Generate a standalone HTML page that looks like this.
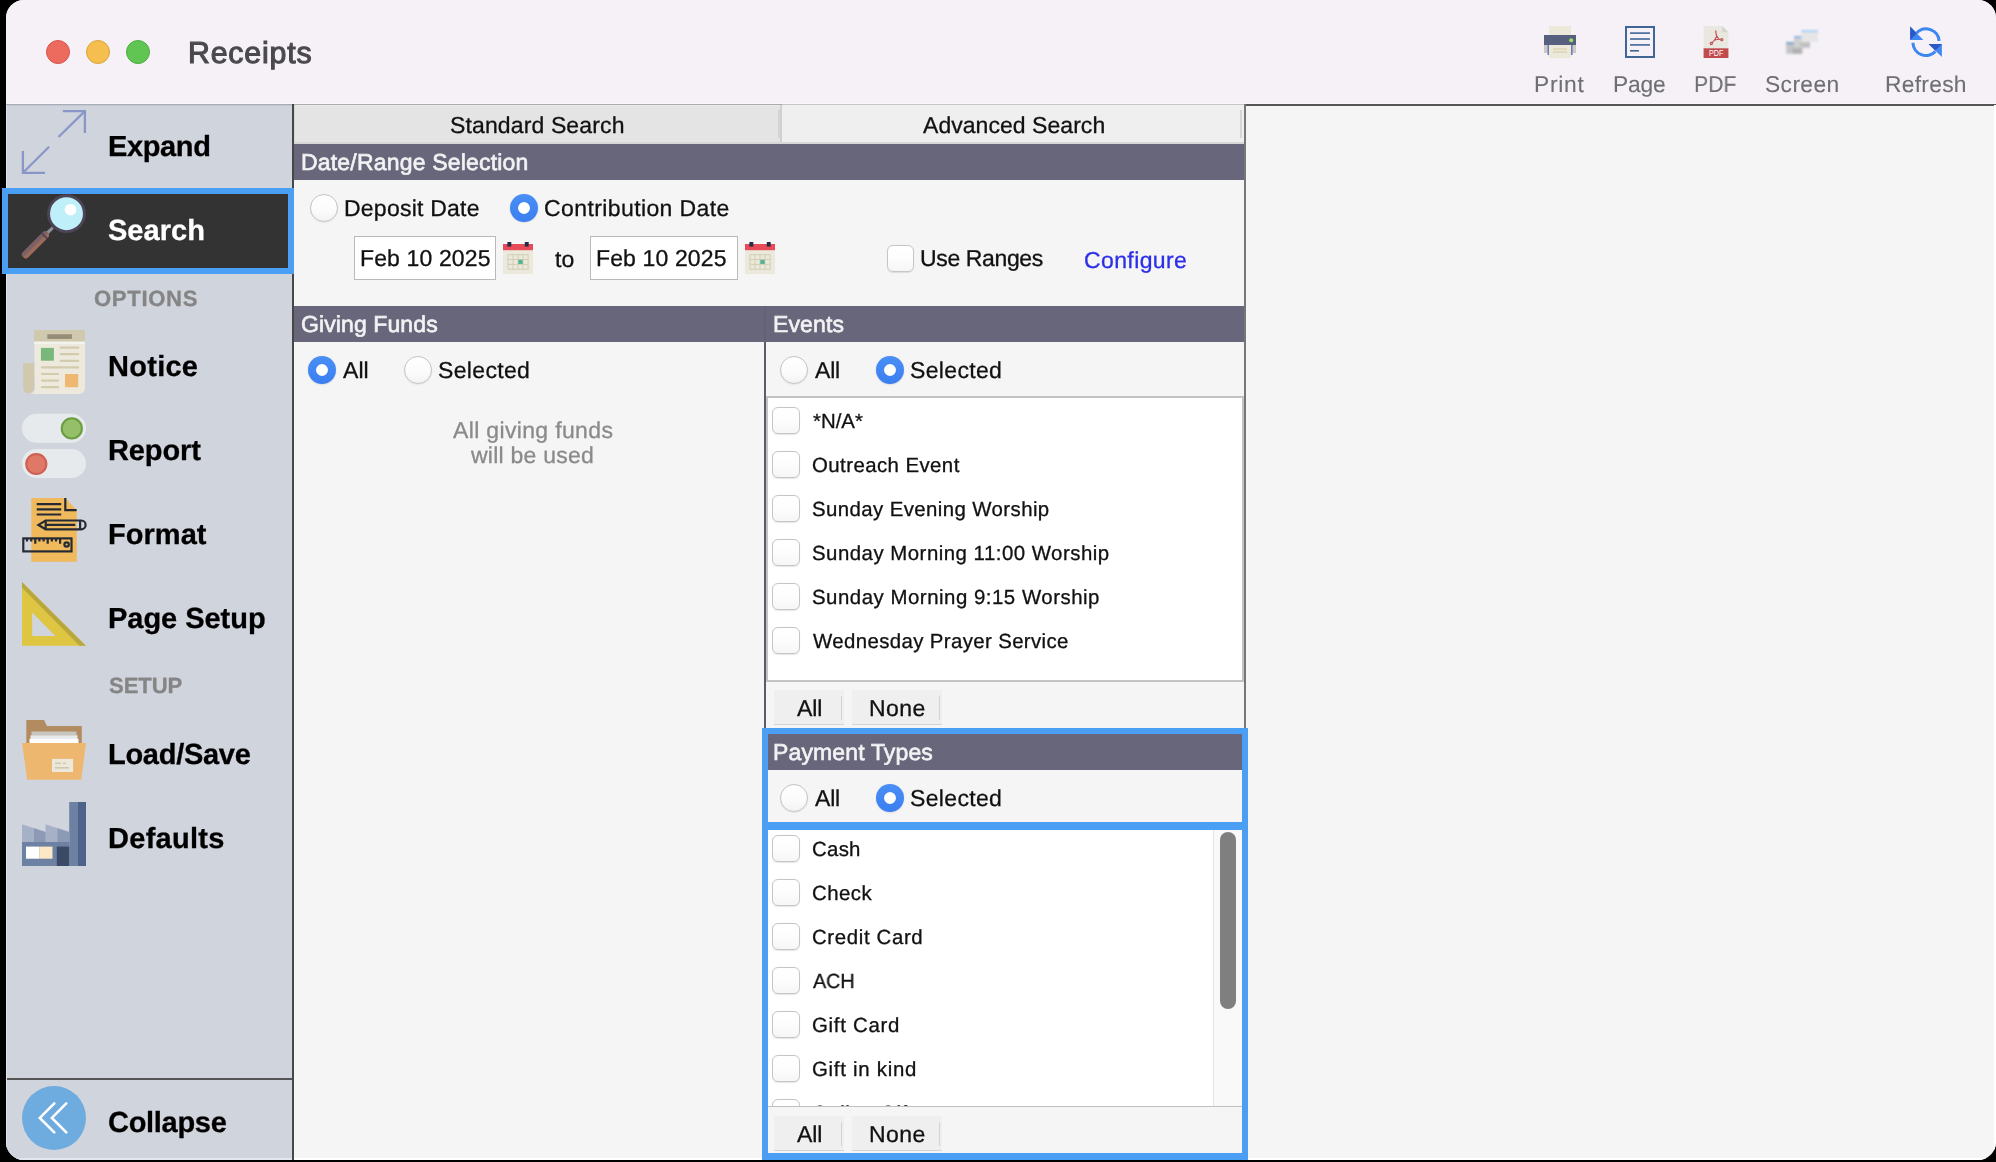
<!DOCTYPE html>
<html><head><meta charset="utf-8"><style>
html,body{margin:0;padding:0;width:1996px;height:1162px;overflow:hidden;background:#000;}
#win{position:absolute;left:6px;top:0;width:1990px;height:1160px;border-radius:18px;overflow:hidden;background:#f5f5f5;}
.a{position:absolute;}
.t{position:absolute;white-space:nowrap;font-family:"Liberation Sans", sans-serif;-webkit-font-smoothing:antialiased;will-change:transform;-webkit-text-stroke:0.3px currentColor;text-rendering:geometricPrecision;}
.rad{width:26px;height:26px;border-radius:50%;background:linear-gradient(#ffffff,#fbfbfb 60%,#f3f3f3);border:1px solid #c4c4c4;box-shadow:0 0.6px 1.2px rgba(0,0,0,0.12);}
.radon{width:28px;height:28px;border-radius:50%;background:radial-gradient(circle at 50% 50%, #fff 0, #fff 5.4px, rgba(255,255,255,0) 6.3px),linear-gradient(#4a8ff6,#3b7ef1);box-shadow:0 0.6px 1.5px rgba(0,0,0,0.18);}
.chk{width:25.5px;height:25.5px;border-radius:6px;background:linear-gradient(#ffffff,#fdfdfd 50%,#f6f6f6);border:1px solid #c6c6c6;box-shadow:0 0.6px 1px rgba(0,0,0,0.10);}
.btn{height:34px;background:#efefef;border-bottom:1.5px solid #d4d4d4;}
</style></head><body>
<div id="win">
<div class="a" style="left:-6px;top:0;width:1996px;height:1162px;">
<!-- titlebar -->
<div class="a" style="left:0;top:0;width:1996px;height:104px;background:#f5f1f7"></div>
<div class="a" style="left:0;top:103px;width:1996px;height:1px;background:#fbf7fb"></div>
<div class="a" style="left:0;top:104px;width:1996px;height:1px;background:#acacac"></div>
<div class="a" style="left:46px;top:40px;width:22px;height:22px;border-radius:50%;background:#ed6a5e;border:1px solid #d6574c"></div>
<div class="a" style="left:86px;top:40px;width:22px;height:22px;border-radius:50%;background:#f5bf4f;border:1px solid #d9a43c"></div>
<div class="a" style="left:126px;top:40px;width:22px;height:22px;border-radius:50%;background:#61c554;border:1px solid #4ead42"></div>
<!-- toolbar icons -->
<svg class="a" style="left:1540px;top:22px" width="40" height="40" viewBox="1540 22 40 40">
  <rect x="1549" y="26" width="22" height="10" fill="#ece9da"/>
  <rect x="1544" y="35" width="32" height="10" fill="#56607e"/>
  <rect x="1544" y="45" width="32" height="8" fill="#c9cbcb"/>
  <rect x="1547.5" y="45" width="1.6" height="10" fill="#6f7bb5"/>
  <rect x="1571" y="45" width="1.6" height="10" fill="#6f7bb5"/>
  <rect x="1549" y="45" width="22" height="13" fill="#ece9da"/>
  <rect x="1553" y="48.5" width="14" height="1" fill="#cfc8a4"/>
  <rect x="1553" y="51.5" width="14" height="1" fill="#cfc8a4"/>
  <circle cx="1571.2" cy="40.2" r="2" fill="#a0e060"/>
</svg>
<svg class="a" style="left:1620px;top:22px" width="40" height="40" viewBox="1620 22 40 40">
  <rect x="1626" y="27" width="28" height="30" fill="none" stroke="#416696" stroke-width="2"/>
  <rect x="1630" y="32.3" width="20" height="1.6" fill="#416696"/>
  <rect x="1630" y="38.2" width="20" height="1.6" fill="#416696"/>
  <rect x="1630" y="44.1" width="20" height="1.6" fill="#416696"/>
  <rect x="1630" y="50" width="9" height="1.6" fill="#416696"/>
</svg>
<svg class="a" style="left:1700px;top:22px" width="34" height="40" viewBox="1700 22 34 40">
  <path d="M1703.6 26 H1722.2 L1728.4 32.3 V58 H1703.6 Z" fill="#e9e8e0"/>
  <path d="M1722.2 26 L1728.4 32.3 H1722.2 Z" fill="#d6d5c8"/>
  <rect x="1703.6" y="48.3" width="24.8" height="9.7" fill="#c04a4e"/>
  <text x="1709" y="56.4" font-family="Liberation Sans" font-size="8.4" fill="#fff" textLength="14.3" lengthAdjust="spacingAndGlyphs">PDF</text>
  <g fill="none" stroke="#c04a4e" stroke-width="1.1" stroke-linejoin="round">
    <path d="M1716 30.5 C1715.4 31.6 1716 34 1716.8 36"/>
    <path d="M1716.8 36 L1719 39.3 L1714.6 40 Z"/>
    <path d="M1714.6 40 L1712 42.8"/>
    <circle cx="1711.3" cy="43.5" r="1.1"/>
    <path d="M1719 39.3 L1720.8 39.5"/>
    <circle cx="1721.8" cy="39.7" r="1.05"/>
  </g>
</svg>
<svg class="a" style="left:1782px;top:26px" width="40" height="32" viewBox="1782 26 40 32">
  <defs><filter id="bl" x="-20%" y="-20%" width="140%" height="140%"><feGaussianBlur stdDeviation="0.8"/></filter></defs>
  <g filter="url(#bl)">
  <rect x="1786.2" y="42" width="16" height="11.8" fill="#c4c4c4"/>
  <rect x="1786.2" y="42" width="16" height="2.2" fill="#7ea4d2"/>
  <rect x="1792.5" y="48.2" width="9.7" height="5.5" fill="#b0b0b0"/>
  <rect x="1794" y="36" width="16" height="12" fill="#d0d0d0"/>
  <rect x="1794" y="36" width="16" height="2.2" fill="#94b8e3"/>
  <rect x="1800.5" y="42.3" width="9.5" height="4.9" fill="#bfbfbf"/>
  <rect x="1801.5" y="30" width="16.5" height="12" fill="#e6e6e6"/>
  <rect x="1801.5" y="30" width="16.5" height="2.2" fill="#b3d0f3"/>
  </g>
</svg>
<svg class="a" style="left:1904px;top:22px" width="42" height="40" viewBox="1904 22 42 40">
  <path d="M1916.6 33 A13 13 0 0 1 1939.05 40.9" fill="none" stroke="#3d87f0" stroke-width="3.1"/>
  <path d="M1912.95 42.7 A13 13 0 0 0 1935.4 51.4" fill="none" stroke="#3d87f0" stroke-width="3.1"/>
  <path d="M1910.2 26.5 L1910.2 39.9 L1923.3 39.9 Z" fill="#3f87f1"/>
  <path d="M1910.2 26.5 L1910.2 39.9 L1916.75 33.2 Z" fill="#2c58c6"/>
  <path d="M1928.6 44 L1941.9 44 L1941.9 57.1 Z" fill="#3f87f1"/>
  <path d="M1928.6 44 L1941.9 44 L1935.25 50.55 Z" fill="#2c58c6"/>
</svg>

<!-- sidebar -->
<div class="a" style="left:0;top:105px;width:292px;height:1057px;background:#d0d4dd"></div>
<div class="a" style="left:0;top:104px;width:292px;height:1px;background:#a6adb6"></div>
<div class="a" style="left:0;top:105px;width:292px;height:1px;background:#c3c8d0"></div>
<div class="a" style="left:292px;top:104px;width:2px;height:1058px;background:#474747"></div>
<div class="a" style="left:0;top:1078px;width:292px;height:2px;background:#555"></div>
<div class="a" style="left:2px;top:188px;width:280px;height:74px;border:6px solid #4a9ff5;background:#333"></div>

<!-- expand icon -->
<svg class="a" style="left:16px;top:105px" width="76" height="76" viewBox="16 105 76 76">
  <g fill="none" stroke="#8a96c8" stroke-width="2.3">
    <path d="M62.9 111.1 H84.9 V132.9"/><path d="M84.9 111.1 L58.5 137"/>
    <path d="M49.1 146.8 L22.9 172.8"/><path d="M22.9 150.9 V172.8 H45"/>
  </g>
</svg>
<!-- magnifier -->
<svg class="a" style="left:16px;top:190px" width="76" height="76" viewBox="16 190 76 76">
  <defs><clipPath id="hcl"><rect x="-3" y="-3.9" width="35" height="7.8" rx="3.9"/></clipPath></defs>
  <g transform="translate(25.2 255.2) rotate(-45)">
    <rect x="30" y="-1.6" width="9" height="3.2" fill="#8e8e96"/>
    <g clip-path="url(#hcl)">
      <rect x="-3" y="-3.9" width="35" height="7.8" fill="#9b6a58"/>
      <rect x="-3" y="-3.9" width="35" height="3.9" fill="#7b6068"/>
      <rect x="26.3" y="-3.9" width="1.9" height="7.8" fill="#4d4458"/>
    </g>
  </g>
  <circle cx="66.5" cy="213.7" r="17.9" fill="#bff0fa" stroke="#4d4458" stroke-width="2.9"/>
  <circle cx="70.5" cy="209.7" r="5.8" fill="#fff"/>
</svg>
<!-- newspaper -->
<svg class="a" style="left:16px;top:326px" width="76" height="72" viewBox="16 326 76 72">
  <path d="M23.2 363 H34 V388 A5.4 5.4 0 0 1 23.2 388 Z" fill="#d0c9ae"/>
  <path d="M34 330 H85 V388 A6 6 0 0 1 79 394 H29 A6 6 0 0 0 35 388 Z" fill="#ede9dc"/>
  <rect x="34" y="330" width="51" height="11.7" fill="#d0c9ae"/>
  <rect x="34" y="341.7" width="51" height="2.2" fill="#f4f3ee"/>
  <rect x="47.3" y="334.3" width="24.6" height="4.6" fill="#958c78"/>
  <rect x="40.9" y="347.9" width="13" height="12.8" fill="#7ab77d"/>
  <rect x="65" y="374" width="13.2" height="13.2" fill="#efb870"/>
  <g stroke="#d3cbae" stroke-width="2.2" stroke-linecap="round">
    <path d="M60.6 347.7 H78.2 M60.6 354.1 H78.2 M60.6 360.8 H78.2 M42 367.4 H78.2 M42 374 H58.2 M42 380.6 H58.2 M42 387.2 H58.2"/>
  </g>
</svg>
<!-- toggles -->
<svg class="a" style="left:16px;top:410px" width="76" height="72" viewBox="16 410 76 72">
  <rect x="22" y="413.8" width="64" height="29" rx="14.5" fill="#e7eaed"/>
  <circle cx="71.8" cy="428.4" r="10.1" fill="#95bf68" stroke="#6a9d40" stroke-width="2"/>
  <rect x="22" y="449" width="64" height="29" rx="14.5" fill="#e7eaed"/>
  <circle cx="36.3" cy="464" r="10.1" fill="#e07868" stroke="#cd5e50" stroke-width="2"/>
</svg>
<!-- format -->
<svg class="a" style="left:16px;top:494px" width="76" height="72" viewBox="16 494 76 72">
  <path d="M31.3 498 H65.3 L76.8 510.2 V561.7 H31.3 Z" fill="#efb95c"/>
  <g fill="none" stroke="#262b33" stroke-width="2.2">
    <path d="M36.7 504.1 H61.2 M36.7 509.3 H61.2 M36.7 514.5 H61.2"/>
    <path d="M65.3 498 V510.2 H76.6"/>
    <path d="M45.7 520.5 H81.2 A4.4 4.4 0 0 1 81.2 529.3 H45.7 L38.4 524.9 Z"/>
    <path d="M45.7 520.5 V529.3 M46 524.8 H75.3 M80.1 520.5 V529.3"/>
    <rect x="23.3" y="538.4" width="48.2" height="13"/>
    <path d="M27 538.4 V541.4 M31.2 538.4 V541.4 M35.3 538.4 V543.8 M39.4 538.4 V541.4 M43.6 538.4 V541.4 M47.7 538.4 V543.8 M51.9 538.4 V541.4 M56 538.4 V541.4 M60.1 538.4 V543.8"/>
    <circle cx="66.6" cy="544.5" r="2.2"/>
  </g>
</svg>
<!-- set square -->
<svg class="a" style="left:16px;top:578px" width="76" height="72" viewBox="16 578 76 72">
  <path d="M22 581.9 L85.8 645.8 H22 Z" fill="#dfc642"/>
  <path d="M22 581.9 L85.8 645.8 H79.6 L22 587.8 Z" fill="#b8a73f"/>
  <path d="M32.2 612.6 L55.3 636 H32.2 Z" fill="#d0d4dd"/>
</svg>
<!-- folder -->
<svg class="a" style="left:16px;top:714px" width="76" height="72" viewBox="16 714 76 72">
  <path d="M26.3 720 H44 L47 726 H81.8 V745 H26.3 Z" fill="#b38b61"/>
  <rect x="31.5" y="731.5" width="45" height="4" fill="#c6c6be"/>
  <rect x="30.5" y="735.3" width="47" height="3.7" fill="#e6e9ee"/>
  <rect x="29.5" y="738.8" width="49" height="5" fill="#ffffff"/>
  <path d="M22 743 H86 L81.2 779.7 H27.2 Z" fill="#eeb76f"/>
  <rect x="52" y="758.9" width="21.1" height="13.1" fill="#ece9dc"/>
  <rect x="55" y="762.5" width="6" height="1.6" fill="#d0c9ae"/><rect x="63" y="762.5" width="3" height="1.6" fill="#d0c9ae"/>
  <rect x="55" y="767" width="14" height="1.6" fill="#d0c9ae"/>
</svg>
<!-- factory -->
<svg class="a" style="left:16px;top:798px" width="76" height="72" viewBox="16 798 76 72">
  <rect x="69.2" y="802" width="8.8" height="64" fill="#6d81a3"/>
  <rect x="78" y="802" width="8" height="64" fill="#4f6289"/>
  <path d="M22 824.3 L45.5 832 V842 H22 Z" fill="#a6b1c7"/>
  <path d="M45.5 824.3 L69.2 832 V842 H45.5 Z" fill="#a6b1c7"/>
  <path d="M34 828.2 L45.5 832 V842 H34 Z" fill="#8d9ab5"/>
  <path d="M57.5 828.2 L69.2 832 V842 H57.5 Z" fill="#8d9ab5"/>
  <rect x="22" y="842" width="47.2" height="24" fill="#6d81a3"/>
  <rect x="26" y="846.6" width="13.2" height="12.1" fill="#ffffff"/>
  <rect x="39.2" y="846.6" width="13.3" height="12.1" fill="#fbe8c5"/>
  <rect x="56.8" y="846.6" width="12.4" height="19.4" fill="#3b4a66"/>
</svg>
<!-- collapse -->
<svg class="a" style="left:16px;top:1080px" width="76" height="76" viewBox="16 1080 76 76">
  <circle cx="54" cy="1118" r="32" fill="#6eabde"/>
  <path d="M54.3 1103.4 L39.8 1117.9 L54.3 1132.4 M66.3 1103.4 L51.9 1117.9 L66.3 1132.4" fill="none" stroke="#fff" stroke-width="2.6" stroke-linecap="round" stroke-linejoin="miter"/>
</svg>

<!-- main: tabs -->
<div class="a" style="left:294px;top:105px;width:486px;height:39px;background:#e4e4e4;"></div>
<div class="a" style="left:294px;top:105px;width:1px;height:39px;background:#d8d8d8;"></div>
<div class="a" style="left:295px;top:105px;width:485px;height:1px;background:#e9e9e9;"></div>
<div class="a" style="left:782px;top:105px;width:462px;height:39px;background:#efefef;"></div>
<div class="a" style="left:780px;top:105px;width:2px;height:37px;background:#d0d0d0;"></div>
<div class="a" style="left:778px;top:110px;width:2px;height:28px;background:#d4d4d4;"></div>
<div class="a" style="left:1240px;top:110px;width:2px;height:28px;background:#d6d6d6;"></div>
<div class="a" style="left:782px;top:104px;width:462px;height:1px;background:#c6c6c6;"></div>
<div class="a" style="left:294px;top:142px;width:950px;height:2px;background:#d7d7d7;"></div>
<!-- right panel -->
<div class="a" style="left:1244px;top:104px;width:752px;height:1.6px;background:#555"></div>
<div class="a" style="left:1244px;top:104px;width:2px;height:1058px;background:#777"></div>
<div class="a" style="left:1994px;top:105px;width:2px;height:1060px;background:#ffffff"></div>
<div class="a" style="left:294px;top:1158px;width:1702px;height:2px;background:#ffffff"></div>
<div class="a" style="left:6px;top:1158px;width:286px;height:2px;background:#e3e6ec"></div>
<div class="a" style="left:6px;top:105px;width:1px;height:83px;background:#dfe3ec"></div>
<div class="a" style="left:6px;top:274px;width:1px;height:885px;background:#dfe3ec"></div>
<!-- headers -->
<div class="a" style="left:294px;top:144px;width:950px;height:36px;background:#67667a"></div>
<div class="a" style="left:294px;top:306px;width:950px;height:36px;background:#67667a"></div>
<div class="a" style="left:764px;top:306px;width:2px;height:36px;background:#626176"></div>
<div class="a" style="left:764px;top:342px;width:2px;height:820px;background:#5a5b6e"></div>
<div class="a" style="left:1243.5px;top:144px;width:2.5px;height:1018px;background:#777"></div>

<!-- radios -->
<div class="a rad" style="left:310px;top:194px"></div>
<div class="a radon" style="left:510px;top:194px"></div>
<div class="a radon" style="left:308px;top:356px"></div>
<div class="a rad" style="left:404px;top:356px"></div>
<div class="a rad" style="left:780.4px;top:356px"></div>
<div class="a radon" style="left:876px;top:356px"></div>

<!-- date fields -->
<div class="a" style="left:354px;top:236px;width:140px;height:42px;background:#fff;border:1px solid #b9b9b9"></div>
<div class="a" style="left:590px;top:236px;width:146px;height:42px;background:#fff;border:1px solid #b9b9b9"></div>
<svg class="a" style="left:500px;top:238px" width="36" height="38" viewBox="500 238 36 38" id="cal1">
  <rect x="503" y="250" width="30" height="24" fill="#ebe9dc"/>
  <rect x="503" y="244" width="30" height="6.2" fill="#e84a58"/>
  <rect x="507.4" y="242" width="3.9" height="4.6" fill="#1f2d45"/>
  <rect x="524.8" y="242" width="3.9" height="4.6" fill="#1f2d45"/>
  <g fill="none" stroke="#d2cdb4" stroke-width="1"><rect x="508" y="254.7" width="20.1" height="14.5"/>
  <path d="M513 254.7 V269.2 M518 254.7 V269.2 M523 254.7 V269.2 M508 259.5 H528 M508 264.4 H528"/></g>
  <rect x="518.3" y="259.8" width="4.4" height="4.2" fill="#52b595"/>
</svg>
<svg class="a" style="left:741.8px;top:238px" width="36" height="38" viewBox="500 238 36 38">
  <rect x="503" y="250" width="30" height="24" fill="#ebe9dc"/>
  <rect x="503" y="244" width="30" height="6.2" fill="#e84a58"/>
  <rect x="507.4" y="242" width="3.9" height="4.6" fill="#1f2d45"/>
  <rect x="524.8" y="242" width="3.9" height="4.6" fill="#1f2d45"/>
  <g fill="none" stroke="#d2cdb4" stroke-width="1"><rect x="508" y="254.7" width="20.1" height="14.5"/>
  <path d="M513 254.7 V269.2 M518 254.7 V269.2 M523 254.7 V269.2 M508 259.5 H528 M508 264.4 H528"/></g>
  <rect x="518.3" y="259.8" width="4.4" height="4.2" fill="#52b595"/>
</svg>
<div class="a chk" style="left:886.5px;top:244.5px"></div>

<!-- events list -->
<div class="a" style="left:766px;top:396px;width:477.5px;height:286px;background:#fff;"></div>
<div class="a" style="left:766px;top:396px;width:477.5px;height:2px;background:#c3c3c3;"></div>
<div class="a" style="left:766px;top:396px;width:1.6px;height:286px;background:#c3c3c3;"></div>
<div class="a" style="left:1242px;top:396px;width:1.5px;height:286px;background:#c3c3c3;"></div>
<div class="a" style="left:766px;top:680px;width:477.5px;height:2px;background:#c3c3c3;"></div>
<div class="a chk" style="left:772px;top:406.5px"></div>
<div class="a chk" style="left:772px;top:450.5px"></div>
<div class="a chk" style="left:772px;top:494.5px"></div>
<div class="a chk" style="left:772px;top:538.5px"></div>
<div class="a chk" style="left:772px;top:582.5px"></div>
<div class="a chk" style="left:772px;top:626.5px"></div>
<div class="a btn" style="left:774px;top:690px;width:70px"><div class="a" style="left:66.5px;top:6px;width:1.5px;height:24px;background:#d3d3d3"></div></div>
<div class="a btn" style="left:852px;top:690px;width:90px"><div class="a" style="left:86.5px;top:6px;width:1.5px;height:24px;background:#d3d3d3"></div></div>

<!-- payment types -->
<div class="a" style="left:762px;top:728px;width:486px;height:431.5px;background:#4a9ff5;"></div>
<div class="a" style="left:768px;top:734px;width:474px;height:36px;background:#67667a;"></div>
<div class="a" style="left:768px;top:770px;width:474px;height:52px;background:#f5f5f5;"></div>
<div class="a" style="left:768px;top:830px;width:474px;height:277px;background:#fff;overflow:hidden">
</div>
<div class="a" style="left:768px;top:1105.6px;width:474px;height:2px;background:#c0c0c0;"></div>
<div class="a" style="left:768px;top:1107.2px;width:474px;height:45.8px;background:#f5f5f5;"></div>
<div class="a" style="left:1212.5px;top:830px;width:29.5px;height:275.5px;background:#f9f9f9;border-left:1.5px solid #e4e4e4;box-sizing:border-box"></div>
<div class="a" style="left:1220px;top:832px;width:16px;height:177px;border-radius:8px;background:#7f7f7f;"></div>
<div class="a chk" style="left:772px;top:834.5px"></div>
<div class="a chk" style="left:772px;top:878.5px"></div>
<div class="a chk" style="left:772px;top:922.5px"></div>
<div class="a chk" style="left:772px;top:966.5px"></div>
<div class="a chk" style="left:772px;top:1010.5px"></div>
<div class="a chk" style="left:772px;top:1054.5px"></div>
<div class="a" style="left:768px;top:1098px;width:444px;height:7.5px;overflow:hidden"><div class="a chk" style="left:4px;top:0.5px"></div><div class="t" style="left:43.57px;top:6.00px;font-size:20.4px;line-height:20.4px;letter-spacing:0.5px;color:#111">Online Gift</div></div>
<div class="a btn" style="left:774px;top:1116px;width:70px"><div class="a" style="left:66.5px;top:6px;width:1.5px;height:24px;background:#d3d3d3"></div></div>
<div class="a rad" style="left:780.4px;top:784px"></div>
<div class="a radon" style="left:876px;top:784px"></div>
<div class="a btn" style="left:852px;top:1116px;width:90px"><div class="a" style="left:86.5px;top:6px;width:1.5px;height:24px;background:#d3d3d3"></div></div>

<div class="t" style="left:187.78px;top:39.00px;font-size:30.30px;line-height:30.30px;letter-spacing:0.821px;color:#4b494e;-webkit-text-stroke:1.1px #4b494e;">Receipts</div>
<div class="t" style="left:1534.18px;top:73.00px;font-size:22.80px;line-height:22.80px;letter-spacing:0.724px;color:#6f6e72;-webkit-text-stroke:0.1px #6f6e72;">Print</div>
<div class="t" style="left:1612.58px;top:73.00px;font-size:22.80px;line-height:22.80px;letter-spacing:-0.200px;color:#6f6e72;-webkit-text-stroke:0.1px #6f6e72;">Page</div>
<div class="t" style="left:1694.08px;top:73.00px;font-size:22.80px;line-height:22.80px;transform:scaleX(0.9240);transform-origin:1.82px 0;color:#6f6e72;-webkit-text-stroke:0.1px #6f6e72;">PDF</div>
<div class="t" style="left:1765.09px;top:73.00px;font-size:22.80px;line-height:22.80px;letter-spacing:0.390px;color:#6f6e72;-webkit-text-stroke:0.1px #6f6e72;">Screen</div>
<div class="t" style="left:1884.78px;top:73.00px;font-size:22.80px;line-height:22.80px;letter-spacing:0.278px;color:#6f6e72;-webkit-text-stroke:0.1px #6f6e72;">Refresh</div>
<div class="t" style="left:107.66px;top:133.00px;font-size:29.00px;line-height:29.00px;letter-spacing:-0.368px;font-weight:bold;color:#000;">Expand</div>
<div class="t" style="left:108.32px;top:217.00px;font-size:29.00px;line-height:29.00px;letter-spacing:0.023px;font-weight:bold;color:#fff;">Search</div>
<div class="t" style="left:94.02px;top:288.00px;font-size:22.10px;line-height:22.10px;letter-spacing:0.657px;font-weight:bold;color:#858585;">OPTIONS</div>
<div class="t" style="left:107.76px;top:353.00px;font-size:29.00px;line-height:29.00px;letter-spacing:0.274px;font-weight:bold;color:#000;">Notice</div>
<div class="t" style="left:107.76px;top:437.00px;font-size:29.00px;line-height:29.00px;letter-spacing:-0.123px;font-weight:bold;color:#000;">Report</div>
<div class="t" style="left:107.56px;top:521.00px;font-size:29.00px;line-height:29.00px;letter-spacing:0.048px;font-weight:bold;color:#000;">Format</div>
<div class="t" style="left:107.56px;top:605.00px;font-size:29.00px;line-height:29.00px;letter-spacing:-0.034px;font-weight:bold;color:#000;">Page Setup</div>
<div class="t" style="left:108.86px;top:675.00px;font-size:22.10px;line-height:22.10px;letter-spacing:-0.086px;font-weight:bold;color:#858585;">SETUP</div>
<div class="t" style="left:107.56px;top:741.00px;font-size:29.00px;line-height:29.00px;letter-spacing:-0.282px;font-weight:bold;color:#000;">Load/Save</div>
<div class="t" style="left:107.56px;top:825.00px;font-size:29.00px;line-height:29.00px;letter-spacing:0.282px;font-weight:bold;color:#000;">Defaults</div>
<div class="t" style="left:108.14px;top:1109.00px;font-size:29.00px;line-height:29.00px;letter-spacing:-0.293px;font-weight:bold;color:#000;">Collapse</div>
<div class="t" style="left:449.88px;top:114.00px;font-size:23.00px;line-height:23.00px;letter-spacing:0.129px;color:#111;">Standard Search</div>
<div class="t" style="left:922.80px;top:114.00px;font-size:23.00px;line-height:23.00px;letter-spacing:0.045px;color:#111;">Advanced Search</div>
<div class="t" style="left:300.66px;top:151.00px;font-size:23.00px;line-height:23.00px;letter-spacing:0.188px;color:#f2f2f4;-webkit-text-stroke:0.65px #f2f2f4;">Date/Range Selection</div>
<div class="t" style="left:343.96px;top:197.00px;font-size:23.00px;line-height:23.00px;letter-spacing:0.229px;color:#111;">Deposit Date</div>
<div class="t" style="left:543.85px;top:197.00px;font-size:23.00px;line-height:23.00px;letter-spacing:0.399px;color:#111;">Contribution Date</div>
<div class="t" style="left:359.56px;top:247.00px;font-size:23.00px;line-height:23.00px;letter-spacing:0.131px;color:#111;">Feb 10 2025</div>
<div class="t" style="left:554.57px;top:248.00px;font-size:23.00px;line-height:23.00px;letter-spacing:0.080px;color:#111;">to</div>
<div class="t" style="left:595.56px;top:247.00px;font-size:23.00px;line-height:23.00px;letter-spacing:0.131px;color:#111;">Feb 10 2025</div>
<div class="t" style="left:920.39px;top:247.00px;font-size:23.00px;line-height:23.00px;letter-spacing:-0.363px;color:#111;">Use Ranges</div>
<div class="t" style="left:1083.85px;top:249.00px;font-size:23.00px;line-height:23.00px;letter-spacing:0.394px;color:#2c2ee8;">Configure</div>
<div class="t" style="left:301.35px;top:313.00px;font-size:23.00px;line-height:23.00px;letter-spacing:0.103px;color:#f2f2f4;-webkit-text-stroke:0.65px #f2f2f4;">Giving Funds</div>
<div class="t" style="left:772.76px;top:313.00px;font-size:23.00px;line-height:23.00px;letter-spacing:0.123px;color:#f2f2f4;-webkit-text-stroke:0.65px #f2f2f4;">Events</div>
<div class="t" style="left:343.00px;top:359.00px;font-size:23.00px;line-height:23.00px;letter-spacing:0.035px;color:#111;">All</div>
<div class="t" style="left:438.08px;top:359.00px;font-size:23.00px;line-height:23.00px;letter-spacing:0.344px;color:#111;">Selected</div>
<div class="t" style="left:452.80px;top:419.00px;font-size:23.00px;line-height:23.00px;letter-spacing:0.346px;color:#8a8a8a;">All giving funds</div>
<div class="t" style="left:471.13px;top:444.00px;font-size:23.00px;line-height:23.00px;letter-spacing:0.235px;color:#8a8a8a;">will be used</div>
<div class="t" style="left:815.00px;top:359.00px;font-size:23.00px;line-height:23.00px;letter-spacing:-0.215px;color:#111;">All</div>
<div class="t" style="left:909.78px;top:359.00px;font-size:23.00px;line-height:23.00px;letter-spacing:0.344px;color:#111;">Selected</div>
<div class="t" style="left:812.80px;top:412.00px;font-size:20.40px;line-height:20.40px;color:#111;">*N/A*</div>
<div class="t" style="left:812.18px;top:456.00px;font-size:20.40px;line-height:20.40px;letter-spacing:0.433px;color:#111;">Outreach Event</div>
<div class="t" style="left:812.18px;top:500.00px;font-size:20.40px;line-height:20.40px;letter-spacing:0.408px;color:#111;">Sunday Evening Worship</div>
<div class="t" style="left:812.18px;top:544.00px;font-size:20.40px;line-height:20.40px;letter-spacing:0.495px;color:#111;">Sunday Morning 11:00 Worship</div>
<div class="t" style="left:812.18px;top:588.00px;font-size:20.40px;line-height:20.40px;letter-spacing:0.520px;color:#111;">Sunday Morning 9:15 Worship</div>
<div class="t" style="left:813.00px;top:632.00px;font-size:20.40px;line-height:20.40px;letter-spacing:0.380px;color:#111;">Wednesday Prayer Service</div>
<div class="t" style="left:797.30px;top:697.00px;font-size:23.00px;line-height:23.00px;letter-spacing:-0.065px;color:#111;">All</div>
<div class="t" style="left:868.96px;top:697.00px;font-size:23.00px;line-height:23.00px;letter-spacing:0.462px;color:#111;">None</div>
<div class="t" style="left:772.76px;top:741.00px;font-size:23.00px;line-height:23.00px;letter-spacing:0.143px;color:#f2f2f4;-webkit-text-stroke:0.65px #f2f2f4;">Payment Types</div>
<div class="t" style="left:815.00px;top:787.00px;font-size:23.00px;line-height:23.00px;letter-spacing:-0.215px;color:#111;">All</div>
<div class="t" style="left:909.78px;top:787.00px;font-size:23.00px;line-height:23.00px;letter-spacing:0.344px;color:#111;">Selected</div>
<div class="t" style="left:811.98px;top:840.00px;font-size:20.40px;line-height:20.40px;letter-spacing:0.281px;color:#111;">Cash</div>
<div class="t" style="left:811.98px;top:884.00px;font-size:20.40px;line-height:20.40px;letter-spacing:0.473px;color:#111;">Check</div>
<div class="t" style="left:811.98px;top:928.00px;font-size:20.40px;line-height:20.40px;letter-spacing:0.646px;color:#111;">Credit Card</div>
<div class="t" style="left:813.00px;top:972.00px;font-size:20.40px;line-height:20.40px;transform:scaleX(0.9688);transform-origin:-0.00px 0;color:#111;">ACH</div>
<div class="t" style="left:811.98px;top:1016.00px;font-size:20.40px;line-height:20.40px;letter-spacing:0.718px;color:#111;">Gift Card</div>
<div class="t" style="left:811.98px;top:1060.00px;font-size:20.40px;line-height:20.40px;letter-spacing:0.736px;color:#111;">Gift in kind</div>
<div class="t" style="left:797.30px;top:1123.00px;font-size:23.00px;line-height:23.00px;letter-spacing:-0.065px;color:#111;">All</div>
<div class="t" style="left:868.96px;top:1123.00px;font-size:23.00px;line-height:23.00px;letter-spacing:0.462px;color:#111;">None</div>
</div>
</div>
<div class="a" style="left:2px;top:188px;width:4px;height:86px;background:#4a9ff5"></div>
</body></html>
